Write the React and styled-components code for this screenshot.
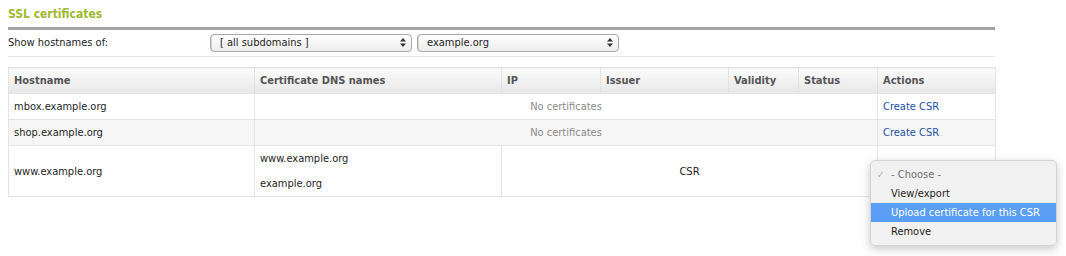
import React from "react";
import styled, { createGlobalStyle } from "styled-components";

const GlobalStyle = createGlobalStyle`
  html, body {
    margin: 0;
    padding: 0;
    background: #fff;
  }
  body {
    font-family: "DejaVu Sans Condensed", "DejaVu Sans", Verdana, sans-serif;
    font-size: 11px;
    color: #1e1e1e;
  }
`;

const HOSTS = [
  { id: 0, host: "mbox.example.org", empty: true },
  { id: 1, host: "shop.example.org", empty: true },
  { id: 2, host: "www.example.org", names: ["www.example.org", "example.org"], state: "CSR" },
];

const MENU_ITEMS = [
  { label: "- Choose -", muted: true, checked: true },
  { label: "View/export" },
  { label: "Upload certificate for this CSR", active: true },
  { label: "Remove" },
];

const SelectArrows = () => (
  <svg width="6" height="9" viewBox="0 0 6 9">
    <path d="M3 0 L6 3.4 L0 3.4 Z" fill="#333" />
    <path d="M3 9 L6 5.6 L0 5.6 Z" fill="#333" />
  </svg>
);

const App = () => {
  return (
    <Page>
      <GlobalStyle />
      <Title>SSL certificates</Title>
      <FilterBar>
        <FilterLabel>Show hostnames of:</FilterLabel>
        <FakeSelect>
          <span>[ all subdomains ]</span>
          <SelectArrows />
        </FakeSelect>
        <FakeSelect>
          <span>example.org</span>
          <SelectArrows />
        </FakeSelect>
      </FilterBar>

      <Table>
        <colgroup>
          <col style={{ width: 246 }} />
          <col style={{ width: 247 }} />
          <col style={{ width: 99 }} />
          <col style={{ width: 128 }} />
          <col style={{ width: 70 }} />
          <col style={{ width: 79 }} />
          <col style={{ width: 118 }} />
        </colgroup>
        <thead>
          <tr>
            <Th>Hostname</Th>
            <Th>Certificate DNS names</Th>
            <Th>IP</Th>
            <Th>Issuer</Th>
            <Th>Validity</Th>
            <Th>Status</Th>
            <Th>Actions</Th>
          </tr>
        </thead>
        <tbody>
          {HOSTS.map((row, i) => (
            <Row key={row.id} $striped={i % 2 === 1}>
              <Td>{row.host}</Td>
              {row.empty ? (
                <>
                  <Td colSpan={5} $center $muted>
                    No certificates
                  </Td>
                  <Td>
                    <ActionLink href="#">Create CSR</ActionLink>
                  </Td>
                </>
              ) : (
                <>
                  <Td $flush>
                    {row.names.map((n) => (
                      <NameLine key={n}>{n}</NameLine>
                    ))}
                  </Td>
                  <Td colSpan={4} $center>
                    {row.state}
                  </Td>
                  <ActionCell>
                    <MenuAnchor>
                      <Menu>
                        {MENU_ITEMS.map((item) => (
                          <MenuItem key={item.label} $active={item.active} $muted={item.muted}>
                            {item.checked && <Check>✓</Check>}
                            {item.label}
                          </MenuItem>
                        ))}
                      </Menu>
                    </MenuAnchor>
                  </ActionCell>
                </>
              )}
            </Row>
          ))}
        </tbody>
      </Table>
    </Page>
  );
};

export default App;

const Page = styled.div`
  width: 987px;
  margin-left: 8px;
  height: 256px;
`;

const Title = styled.div`
  height: 30px;
  box-sizing: border-box;
  padding-top: 7px;
  font-size: 12px;
  font-weight: bold;
  color: #9dba2f;
  border-bottom: 3px solid #a3a3a3;
`;

const FilterBar = styled.div`
  display: flex;
  align-items: center;
  gap: 5px;
  height: 27px;
  box-sizing: border-box;
  padding-bottom: 1px;
  border-bottom: 1px solid #e6e6e6;
`;

const FilterLabel = styled.div`
  width: 197px;
`;

const FakeSelect = styled.div`
  display: flex;
  align-items: center;
  justify-content: space-between;
  width: 202px;
  height: 18px;
  box-sizing: border-box;
  padding: 0 5px 0 9px;
  border: 1px solid #a9a9a9;
  border-radius: 4px;
  background: linear-gradient(#ffffff, #ececec);
  box-shadow: inset 1px 0 0 #d0d0d0;
`;

const Table = styled.table`
  margin-top: 10px;
  width: 988px;
  table-layout: fixed;
  border-collapse: collapse;
  border: 1px solid #e4e4e4;
`;

const Th = styled.th`
  height: 25px;
  padding: 0 5px;
  text-align: left;
  font-weight: bold;
  color: #555;
  background: linear-gradient(#fbfbfb, #e7e7e7);
  border-left: 1px solid #e2e2e2;
`;

const Row = styled.tr`
  background: ${(p) => (p.$striped ? "#f6f6f6" : "#fff")};
  border-top: 1px solid #e4e4e4;
`;

const Td = styled.td`
  height: 25px;
  padding: ${(p) => (p.$flush ? "0" : "0 5px")};
  text-align: ${(p) => (p.$center ? "center" : "left")};
  color: ${(p) => (p.$muted ? "#8a8a8a" : "inherit")};
  border-left: 1px solid #e4e4e4;
  vertical-align: middle;
`;

const NameLine = styled.div`
  height: 25px;
  line-height: 25px;
  padding: 0 5px;
`;

const ActionLink = styled.a`
  color: #2450a6;
  text-decoration: none;
`;

const ActionCell = styled.td`
  padding: 0;
  border-left: 1px solid #e4e4e4;
  vertical-align: top;
`;

const MenuAnchor = styled.div`
  position: relative;
  height: 50px;
`;

const Menu = styled.div`
  position: absolute;
  left: -8px;
  top: 14px;
  width: 187px;
  padding: 4px 0;
  box-sizing: border-box;
  background: rgba(241, 241, 241, 0.98);
  border: 1px solid #d4d4d4;
  border-radius: 5px;
  box-shadow: 0 3px 10px rgba(0, 0, 0, 0.22);
  z-index: 2;
`;

const MenuItem = styled.div`
  position: relative;
  height: 19px;
  line-height: 19px;
  padding-left: 20px;
  white-space: nowrap;
  background: ${(p) => (p.$active ? "#5a9ef6" : "transparent")};
  color: ${(p) => (p.$active ? "#fff" : p.$muted ? "#6f6f6f" : "#1e1e1e")};
`;

const Check = styled.span`
  position: absolute;
  left: 6px;
  color: #b0b0b0;
  font-size: 10px;
`;
